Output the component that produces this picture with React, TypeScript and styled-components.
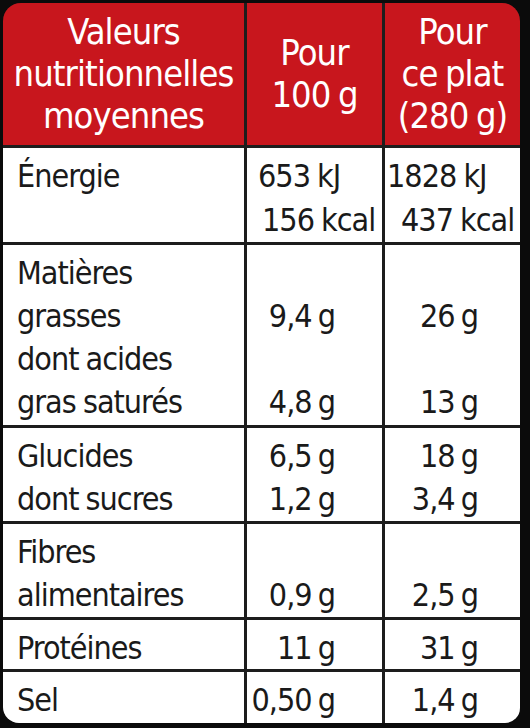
import { Fragment } from 'react';
import styled, { createGlobalStyle } from 'styled-components';

const GlobalStyle = createGlobalStyle`
  html, body {
    margin: 0;
    padding: 0;
    background: #0b0b0b;
  }
`;

const Page = styled.div`
  width: 530px;
  height: 728px;
  box-sizing: border-box;
  padding: 3px 10px 5px 3px;
  background: #0b0b0b;
  font-family: "DejaVu Sans Condensed", "DejaVu Sans", sans-serif;
`;

const Table = styled.div`
  display: grid;
  grid-template-columns: 241px 135px 135px;
  gap: 3px;
  background: #1d1d1d;
  border-radius: 18px 18px 15px 16px;
  overflow: hidden;
`;

const HeadCell = styled.div`
  height: 142px;
  background: #c8161d;
  color: #fff;
  font-size: 36px;
  line-height: 42px;
  display: flex;
  flex-direction: column;
  justify-content: center;
  align-items: center;
  text-align: center;
  letter-spacing: -0.9px;
  word-spacing: -2px;
`;

const Cell = styled.div<{ h: number }>`
  height: ${({ h }) => h}px;
  box-sizing: border-box;
  background: #fff;
  color: #1a1a1a;
  font-size: 32px;
  line-height: 43px;
  padding-top: 7px;
  letter-spacing: -1px;
  word-spacing: -1px;
  white-space: nowrap;
`;

const Label = styled(Cell)`
  padding-left: 14px;
`;

const Value = styled(Cell)<{ right: number }>`
  text-align: right;
  padding-right: ${({ right }) => right}px;
  word-spacing: -2px;
`;

const Line = styled.div`
  height: 43px;
`;

const EnergyLine = styled.div<{ indent: number }>`
  height: 44px;
  padding-left: ${({ indent }) => indent}px;
`;

type Row = {
  label: string[];
  h: number;
  per100: string[];
  plate: string[];
};

const rows: Row[] = [
  {
    label: ['Matières', 'grasses', 'dont acides', 'gras saturés'],
    h: 180,
    per100: ['', '9,4 g', '', '4,8 g'],
    plate: ['', '26 g', '', '13 g'],
  },
  {
    label: ['Glucides', 'dont sucres'],
    h: 93,
    per100: ['6,5 g', '1,2 g'],
    plate: ['18 g', '3,4 g'],
  },
  {
    label: ['Fibres', 'alimentaires'],
    h: 93,
    per100: ['', '0,9 g'],
    plate: ['', '2,5 g'],
  },
  { label: ['Protéines'], h: 49, per100: ['11 g'], plate: ['31 g'] },
  { label: ['Sel'], h: 51, per100: ['0,50 g'], plate: ['1,4 g'] },
];

const lines = (items: string[]) =>
  items.map((t, i) => <Line key={i}>{t || '\u00a0'}</Line>);

export default function App() {
  return (
    <>
      <GlobalStyle />
      <Page>
        <Table>
          <HeadCell>
            <span>Valeurs</span>
            <span>nutritionnelles</span>
            <span>moyennes</span>
          </HeadCell>
          <HeadCell>
            <span>Pour</span>
            <span>100 g</span>
          </HeadCell>
          <HeadCell>
            <span>Pour</span>
            <span>ce plat</span>
            <span>(280 g)</span>
          </HeadCell>

          <Label h={94}>Énergie</Label>
          <Cell h={94}>
            <EnergyLine indent={11}>653 kJ</EnergyLine>
            <EnergyLine indent={15}>156 kcal</EnergyLine>
          </Cell>
          <Cell h={94}>
            <EnergyLine indent={2}>1828 kJ</EnergyLine>
            <EnergyLine indent={16}>437 kcal</EnergyLine>
          </Cell>

          {rows.map((r) => (
            <Fragment key={r.label[0]}>
              <Label h={r.h}>{lines(r.label)}</Label>
              <Value h={r.h} right={47}>{lines(r.per100)}</Value>
              <Value h={r.h} right={42}>{lines(r.plate)}</Value>
            </Fragment>
          ))}
        </Table>
      </Page>
    </>
  );
}
